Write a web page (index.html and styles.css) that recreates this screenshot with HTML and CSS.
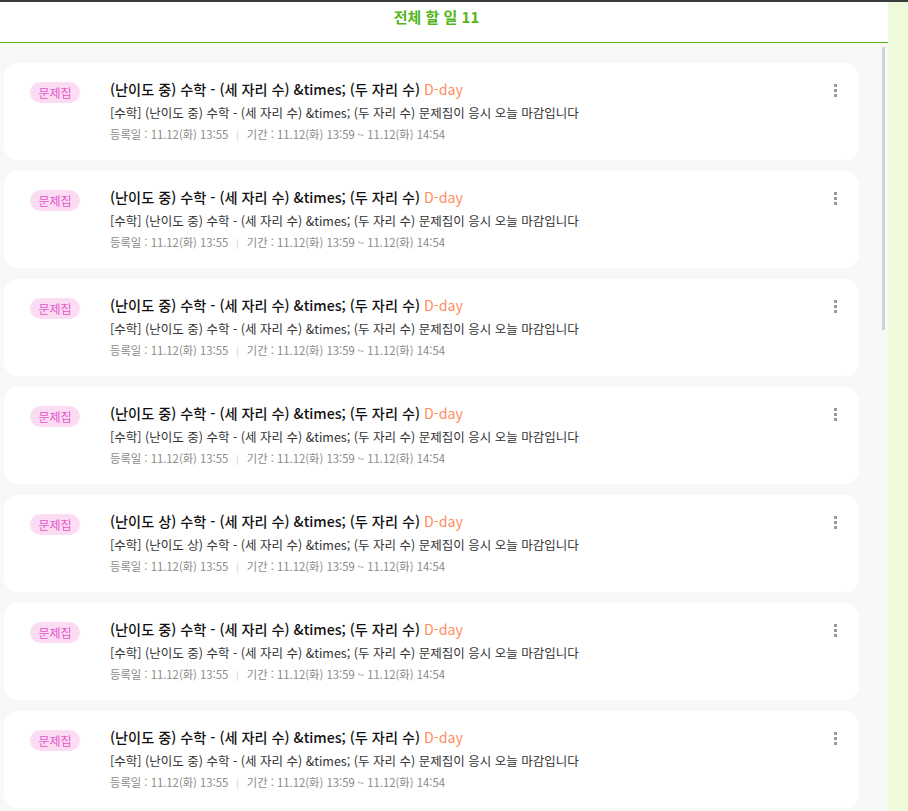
FILE: index.html
```html
<!DOCTYPE html>
<html lang="ko">

<head>
  <meta charset="UTF-8">
  <meta name="viewport" content="width=device-width, initial-scale=1.0">
  <title>전체 할 일</title>
  <link rel="stylesheet" href="styles.css">
</head>

<body>
  <div class="page">
    <main class="panel">
      <header class="panel-header">
        <h1>전체 할 일 <span class="count">11</span></h1>
      </header>
      <!-- Todo list -->
      <ul class="todo-list">
        <li class="todo">
          <span class="badge">문제집</span>
          <div class="todo-body">
            <p class="todo-title">(난이도 중) 수학 - (세 자리 수) &amp;times; (두 자리 수) <span class="dday">D-day</span></p>
            <p class="todo-desc">[수학] (난이도 중) 수학 - (세 자리 수) &amp;times; (두 자리 수) 문제집이 응시 오늘 마감입니다</p>
            <p class="todo-meta">등록일 : 11.12(화) 13:55<span class="sep">|</span>기간 : 11.12(화) 13:59 ~ 11.12(화) 14:54</p>
          </div>
          <button class="more" aria-label="더보기"><i></i><i></i><i></i></button>
        </li>
        <li class="todo">
          <span class="badge">문제집</span>
          <div class="todo-body">
            <p class="todo-title">(난이도 중) 수학 - (세 자리 수) &amp;times; (두 자리 수) <span class="dday">D-day</span></p>
            <p class="todo-desc">[수학] (난이도 중) 수학 - (세 자리 수) &amp;times; (두 자리 수) 문제집이 응시 오늘 마감입니다</p>
            <p class="todo-meta">등록일 : 11.12(화) 13:55<span class="sep">|</span>기간 : 11.12(화) 13:59 ~ 11.12(화) 14:54</p>
          </div>
          <button class="more" aria-label="더보기"><i></i><i></i><i></i></button>
        </li>
        <li class="todo">
          <span class="badge">문제집</span>
          <div class="todo-body">
            <p class="todo-title">(난이도 중) 수학 - (세 자리 수) &amp;times; (두 자리 수) <span class="dday">D-day</span></p>
            <p class="todo-desc">[수학] (난이도 중) 수학 - (세 자리 수) &amp;times; (두 자리 수) 문제집이 응시 오늘 마감입니다</p>
            <p class="todo-meta">등록일 : 11.12(화) 13:55<span class="sep">|</span>기간 : 11.12(화) 13:59 ~ 11.12(화) 14:54</p>
          </div>
          <button class="more" aria-label="더보기"><i></i><i></i><i></i></button>
        </li>
        <li class="todo">
          <span class="badge">문제집</span>
          <div class="todo-body">
            <p class="todo-title">(난이도 중) 수학 - (세 자리 수) &amp;times; (두 자리 수) <span class="dday">D-day</span></p>
            <p class="todo-desc">[수학] (난이도 중) 수학 - (세 자리 수) &amp;times; (두 자리 수) 문제집이 응시 오늘 마감입니다</p>
            <p class="todo-meta">등록일 : 11.12(화) 13:55<span class="sep">|</span>기간 : 11.12(화) 13:59 ~ 11.12(화) 14:54</p>
          </div>
          <button class="more" aria-label="더보기"><i></i><i></i><i></i></button>
        </li>
        <li class="todo">
          <span class="badge">문제집</span>
          <div class="todo-body">
            <p class="todo-title">(난이도 상) 수학 - (세 자리 수) &amp;times; (두 자리 수) <span class="dday">D-day</span></p>
            <p class="todo-desc">[수학] (난이도 상) 수학 - (세 자리 수) &amp;times; (두 자리 수) 문제집이 응시 오늘 마감입니다</p>
            <p class="todo-meta">등록일 : 11.12(화) 13:55<span class="sep">|</span>기간 : 11.12(화) 13:59 ~ 11.12(화) 14:54</p>
          </div>
          <button class="more" aria-label="더보기"><i></i><i></i><i></i></button>
        </li>
        <li class="todo">
          <span class="badge">문제집</span>
          <div class="todo-body">
            <p class="todo-title">(난이도 중) 수학 - (세 자리 수) &amp;times; (두 자리 수) <span class="dday">D-day</span></p>
            <p class="todo-desc">[수학] (난이도 중) 수학 - (세 자리 수) &amp;times; (두 자리 수) 문제집이 응시 오늘 마감입니다</p>
            <p class="todo-meta">등록일 : 11.12(화) 13:55<span class="sep">|</span>기간 : 11.12(화) 13:59 ~ 11.12(화) 14:54</p>
          </div>
          <button class="more" aria-label="더보기"><i></i><i></i><i></i></button>
        </li>
        <li class="todo">
          <span class="badge">문제집</span>
          <div class="todo-body">
            <p class="todo-title">(난이도 중) 수학 - (세 자리 수) &amp;times; (두 자리 수) <span class="dday">D-day</span></p>
            <p class="todo-desc">[수학] (난이도 중) 수학 - (세 자리 수) &amp;times; (두 자리 수) 문제집이 응시 오늘 마감입니다</p>
            <p class="todo-meta">등록일 : 11.12(화) 13:55<span class="sep">|</span>기간 : 11.12(화) 13:59 ~ 11.12(화) 14:54</p>
          </div>
          <button class="more" aria-label="더보기"><i></i><i></i><i></i></button>
        </li>
      </ul>
      <span class="scroll-thumb"></span>
    </main>
    <aside class="side"></aside>
  </div>
</body>

</html>
```

FILE: styles.css
```css
* {
  box-sizing: border-box;
}

html,
body {
  height: 100%;
}

body {
  margin: 0;
  overflow: hidden;
  font-family: "Noto Sans CJK KR", "Noto Sans", sans-serif;
  color: #111;
  border-top: 2px solid #3a3a3a;
}

.page {
  display: flex;
  height: 100%;
}

.panel {
  position: relative;
  flex: 1;
  display: flex;
  flex-direction: column;
  min-width: 0;
  background: #f7f9f6;
}

.side {
  width: 20px;
  background: #eefad9;
}

.panel-header {
  height: 41px;
  flex-shrink: 0;
  padding-right: 15px;
  background: #fff;
  border-bottom: 1px solid #52b51a;
  display: flex;
  align-items: center;
  justify-content: center;
}

.panel-header h1 {
  margin: 0 0 12px;
  font-size: 15px;
  font-weight: 700;
  color: #52b51a;
}

/* list fills the rest of the panel */
.todo-list {
  flex: 1;
  overflow: hidden;
  list-style: none;
  margin: 0;
  padding: 20px 29px 0 4px;
  display: flex;
  flex-direction: column;
  gap: 11px;
}

.scroll-thumb {
  position: absolute;
  top: 45px;
  right: 3px;
  width: 3px;
  height: 283px;
  background: #d3d3d3;
}

.todo {
  flex-shrink: 0;
  display: flex;
  align-items: flex-start;
  height: 97px;
  background: #fff;
  border-radius: 14px;
  padding: 16px 22px 0 26px;
}

.badge {
  flex-shrink: 0;
  width: 50px;
  height: 21px;
  margin-top: 3px;
  margin-right: 30px;
  border-radius: 11px;
  background: #fcdcf3;
  color: #e655cc;
  font-size: 12px;
  line-height: 21px;
  text-align: center;
}

.todo-body {
  flex: 1;
  min-width: 0;
}

.todo-body p {
  margin: 0;
  white-space: nowrap;
}

.todo-title {
  font-size: 14.2px;
  font-weight: 500;
  line-height: 20px;
  color: #111;
}

.dday {
  color: #ff8d5c;
  font-weight: 400;
}

.todo-desc {
  margin-top: 5px !important;
  font-size: 12.5px;
  line-height: 18px;
  color: #333;
}

.todo-meta {
  margin-top: 3px !important;
  font-size: 11.3px;
  line-height: 18px;
  color: #8a8a8a;
}

.sep {
  margin: 0 8px;
  color: #c8c8c8;
  font-size: 9px;
}

.more {
  flex-shrink: 0;
  display: flex;
  flex-direction: column;
  gap: 2px;
  margin-top: 5px;
  padding: 0;
  border: 0;
  background: none;
  width: 3px;
}

.more i {
  display: block;
  width: 3px;
  height: 3px;
  background: #999;
}
```
